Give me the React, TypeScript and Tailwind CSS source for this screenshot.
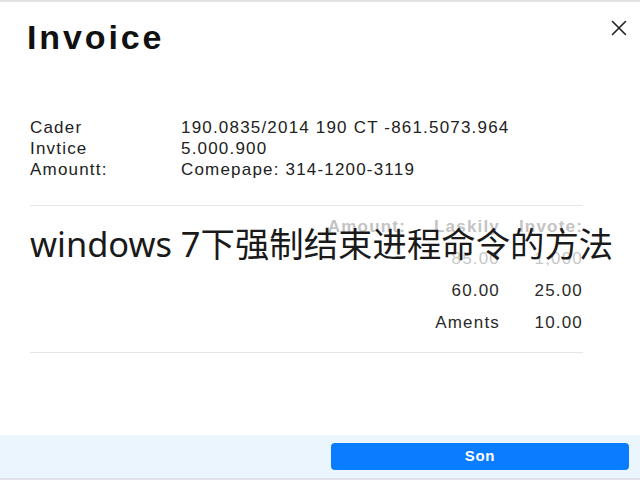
import React from "react";

const rows = [
  { label: "Cader", value: "190.0835/2014 190 CT -861.5073.964" },
  { label: "Invtice", value: "5.000.900" },
  { label: "Amountt:", value: "Comepape: 314-1200-3119" },
];

export default function App() {
  return (
    <div
      className="relative flex h-[480px] w-[640px] flex-col overflow-hidden border-t-2 border-[#e2e2e2] bg-white text-[#1c1c1c]"
      style={{ fontFamily: '"Liberation Sans", Arial, sans-serif' }}
    >
      <div className="flex items-start justify-between pl-[27px] pr-[12px] pt-[15px]">
        <h1 className="text-[34px] font-bold leading-[40px] tracking-[0.085em] text-[#111]">Invoice</h1>
        <svg width="18" height="18" viewBox="0 0 18 18" className="mt-[2px]" fill="none" stroke="#222" strokeWidth="1.6" strokeLinecap="round">
          <path d="M2.5 2.5 L15.5 15.5 M15.5 2.5 L2.5 15.5" />
        </svg>
      </div>

      <div className="mt-[60px] grid grid-cols-[151px_1fr] pl-[30px] text-[17px] leading-[21px] tracking-[0.07em] text-[#222]">
        {rows.map((r) => (
          <React.Fragment key={r.label}>
            <div>{r.label}</div>
            <div>{r.value}</div>
          </React.Fragment>
        ))}
      </div>

      <div className="ml-[30px] mr-[57px] mt-[25px] h-px bg-[#e6e6e6]" />

      <div className="flex flex-col pr-[57px] pt-[5px] pb-[13px] text-[17px] leading-[32px] tracking-[0.07em]">
        <div className="flex justify-end font-semibold text-[#c4c4c4]">
          <div className="w-[100px] text-right">Amount:</div>
          <div className="w-[94px] text-right">Laskily</div>
          <div className="w-[83px] text-right">Invote:</div>
        </div>
        <div className="flex justify-end text-[#c8c8c8]">
          <div className="w-[94px] text-right">85.00</div>
          <div className="w-[83px] text-right">1,000</div>
        </div>
        <div className="flex justify-end text-[#2a2a2a]">
          <div className="w-[94px] text-right">60.00</div>
          <div className="w-[83px] text-right">25.00</div>
        </div>
        <div className="flex justify-end text-[#2a2a2a]">
          <div className="w-[94px] text-right">Aments</div>
          <div className="w-[83px] text-right">10.00</div>
        </div>
      </div>

      <div className="ml-[30px] mr-[57px] h-px bg-[#e6e6e6]" />

      <div className="flex-1" />

      <div className="flex h-[45px] justify-end border-b-2 border-[#dfe3e8] bg-[#ebf5fe] pr-[11px] pt-[8px]">
        <button className="h-[27px] w-[298px] rounded-[4px] bg-[#0a7cff] text-[15px] font-bold tracking-[0.05em] text-white">
          Son
        </button>
      </div>

      <div
        className="absolute left-[30px] top-[222px] whitespace-nowrap text-[34.4px] leading-[40px] text-[#1a1a1a]"
        style={{ fontFamily: '"Noto Sans", "Noto Sans CJK SC", sans-serif' }}
      >
        windows 7下强制结束进程命令的方法
      </div>
    </div>
  );
}
